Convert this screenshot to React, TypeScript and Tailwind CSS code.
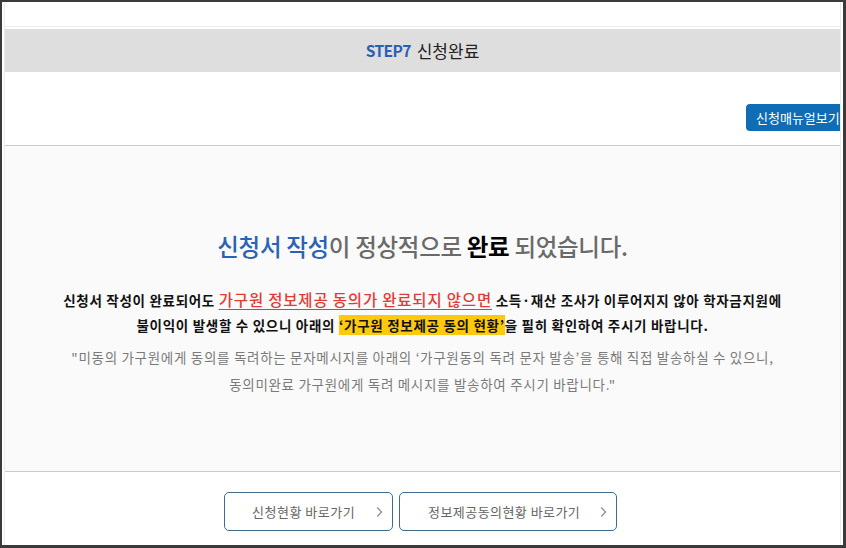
import React from "react";

const font = { fontFamily: '"Noto Sans CJK KR", "Noto Sans", sans-serif' };

function Chevron() {
  return (
    <svg width="7" height="12" viewBox="0 0 7 12" fill="none">
      <path d="M1.2 1.5 L5.6 6 L1.2 10.5" stroke="#8a8a8a" strokeWidth="1.2" />
    </svg>
  );
}

export default function App() {
  return (
    <div
      className="w-[846px] h-[548px] overflow-hidden bg-white border-t-2 border-l-2 border-r-[3px] border-b-[3px] border-[#3a3a3a] flex flex-col"
      style={font}
    >
      <div className="flex-1 flex flex-col border-x border-[#ececec] mx-[2px] overflow-hidden">
        <div className="h-[25px] border-b border-[#ededed] shrink-0" />
        <div className="h-[2px] shrink-0" />
        <div className="h-[43px] shrink-0 bg-[#dedede] flex items-center justify-center leading-none">
          <span className="text-[15.5px] font-bold text-[#2c5fb3] tracking-[-0.6px]">STEP7</span>
          <span className="ml-[6px] text-[17px] text-[#222]">신청완료</span>
        </div>
        <div className="h-[74px] shrink-0 flex items-start justify-end pt-[32px] border-b border-[#c9c9c9]">
          <div className="w-[106px] h-[27px] mr-[-12px] rounded-[4px] bg-[#0f6db5] text-white text-[13px] flex items-center pl-[10px] leading-none whitespace-nowrap">
            신청매뉴얼보기
          </div>
        </div>
        <div className="h-[326px] shrink-0 bg-[#fafafa] border-b border-[#c9c9c9] flex flex-col items-center pt-[84px]">
          <h1 className="text-[23.5px] font-medium leading-[32px] text-[#6a6a6a] tracking-[-0.3px]">
            <span className="text-[#2a63b5]">신청서 작성</span>이 정상적으로{" "}
            <span className="text-black font-bold">완료</span> 되었습니다.
          </h1>
          <p className="mt-[25px] text-[13.5px] font-bold text-[#111] leading-[25px] text-center tracking-[0.7px]">
            신청서 작성이 완료되어도{" "}
            <span className="text-[15.5px] font-medium text-[#e53935] tracking-[0.8px] underline underline-offset-[3px]">
              가구원 정보제공 동의가 완료되지 않으면
            </span>{" "}
            소득·재산 조사가 이루어지지 않아 학자금지원에
            <br />
            불이익이 발생할 수 있으니 아래의{" "}
            <span className="bg-[#ffc90e]">‘가구원 정보제공 동의 현황’</span>을 필히 확인하여 주시기
            바랍니다.
          </p>
          <p className="mt-[6px] text-[13.5px] text-[#7a7a7a] leading-[27px] text-center tracking-[0.7px]">
            "미동의 가구원에게 동의를 독려하는 문자메시지를 아래의 ‘가구원동의 독려 문자 발송’을 통해 직접
            발송하실 수 있으니,
            <br />
            동의미완료 가구원에게 독려 메시지를 발송하여 주시기 바랍니다."
          </p>
        </div>
        <div className="flex justify-center gap-[6px] pt-[20px] pr-[4px]">
          <button className="relative w-[169px] h-[39px] rounded-[5px] border border-[#3f6b8c] bg-white text-[13px] tracking-[0.5px] text-[#666] flex items-center pl-[27px]">
            신청현황 바로가기
            <span className="absolute right-[9px] top-[13px] flex">
              <Chevron />
            </span>
          </button>
          <button className="relative w-[218px] h-[39px] rounded-[5px] border border-[#3f6b8c] bg-white text-[13px] tracking-[0.45px] text-[#666] flex items-center pl-[28px]">
            정보제공동의현황 바로가기
            <span className="absolute right-[9px] top-[13px] flex">
              <Chevron />
            </span>
          </button>
        </div>
      </div>
    </div>
  );
}
